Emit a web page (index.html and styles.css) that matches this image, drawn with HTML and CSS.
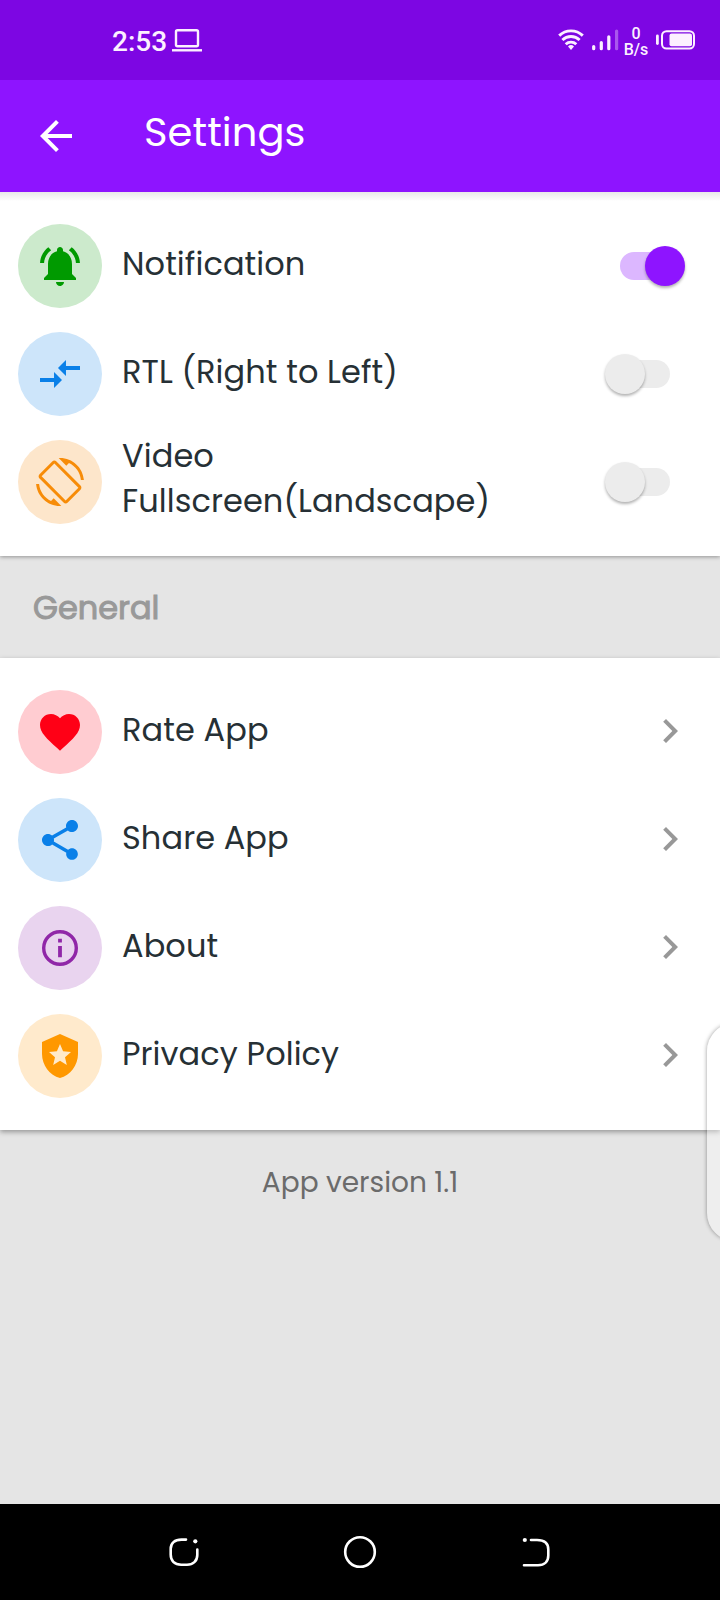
FILE: index.html
```html
<!DOCTYPE html>
<html lang="en">
<head>
<meta charset="utf-8">
<title>Settings</title>
<link rel="stylesheet" href="styles.css">
</head>
<body>
<div class="screen">
  <div class="statusbar">
    <span class="clock">2:53</span>
    <svg class="laptop" width="30" height="24" viewBox="0 0 30 24" fill="none" stroke="currentColor"><rect x="4" y="2.200" width="22" height="16" rx="1.500" stroke-width="2.400"/><path d="M0 22.300h30" stroke-width="2.400"/></svg>
    <div class="status-icons">
      <svg class="wifi" width="26" height="22" viewBox="0 0 26 22" fill="none" stroke="currentColor" stroke-width="2.900"><path d="M1.200 6.600a17 17 0 0 1 23.600 0M4.400 11a12.400 12.400 0 0 1 17.200 0M7.700 15.200a7.800 7.800 0 0 1 10.600 0"/><path d="M10 17.500a4.400 4.400 0 0 1 6 0L13 21z" fill="currentColor" stroke="none"/></svg>
      <svg class="signal" width="27" height="22" viewBox="0 0 27 22" fill="none" stroke="currentColor" stroke-width="3.200" stroke-linecap="round"><path d="M1.700 17.500v2.200M9.300 13.500v6.200M16.800 7.800v11.900"/><path class="weak" d="M24.600 2v17.700"/></svg>
      <div class="speed"><span>0</span><span>B/s</span></div>
      <svg class="battery" width="39" height="20" viewBox="0 0 39 20"><path d="M1.400 6v7.500" stroke="currentColor" stroke-width="2.800" stroke-linecap="round"/><rect x="6" y="1.200" width="32" height="17.400" rx="4.500" fill="none" stroke="currentColor" stroke-width="2"/><rect x="13.500" y="3.500" width="22.500" height="12.800" rx="2" fill="currentColor"/></svg>
    </div>
  </div>
  <header class="appbar">
    <svg class="icon" viewBox="0 0 24 24"><path d="M20 11H7.830l5.590-5.590L12 4l-8 8 8 8 1.410-1.410L7.830 13H20v-2z"/></svg>
    <h1 class="title">Settings</h1>
  </header>
  <section class="card first">
    <div class="row">
      <span class="badge green"><svg class="icon" viewBox="0 0 24 24"><path d="M7.580 4.080L6.150 2.650C3.750 4.480 2.170 7.300 2.030 10.500h2c.15-2.650 1.510-4.970 3.550-6.420zm12.390 6.420h2c-.15-3.200-1.730-6.020-4.120-7.850l-1.420 1.430c2.020 1.450 3.390 3.770 3.540 6.420zM18 11c0-3.070-1.640-5.640-4.500-6.320V4c0-.83-.67-1.500-1.500-1.500s-1.500.67-1.500 1.500v.68C7.630 5.360 6 7.920 6 11v5l-2 2v1h16v-1l-2-2v-5zm-6 11c.14 0 .27-.01.4-.04.65-.14 1.180-.58 1.440-1.180.1-.24.15-.5.15-.78h-4c.01 1.100.9 2 2.010 2z"/></svg></span>
      <span class="label">Notification</span>
      <span class="switch on"><i class="track"></i><i class="thumb"></i></span>
    </div>
    <div class="row">
      <span class="badge blue"><svg class="icon" viewBox="0 0 24 24"><path d="M9.010 14H2v2h7.010v3L13 15l-3.990-4v3zm5.980-1v-3H22V8h-7.010V5L11 9l3.990 4z"/></svg></span>
      <span class="label">RTL (Right to Left)</span>
      <span class="switch"><i class="track"></i><i class="thumb"></i></span>
    </div>
    <div class="row">
      <span class="badge orange"><svg class="icon" viewBox="0 0 24 24"><path d="M16.480 2.520c3.270 1.550 5.610 4.720 5.970 8.480h1.500C23.440 4.840 18.290 0 12 0l-.66.03 3.810 3.810 1.330-1.320zm-6.250-.77c-.59-.59-1.540-.59-2.120 0L1.750 8.110c-.59.59-.59 1.540 0 2.120l12.020 12.020c.59.59 1.540.59 2.120 0l6.360-6.360c.59-.59.59-1.540 0-2.120L10.230 1.750zm4.600 19.440L2.810 9.170l6.360-6.360 12.020 12.020-6.360 6.360zm-7.310.29C4.250 19.940 1.910 16.760 1.550 13H.05C.56 19.160 5.710 24 12 24l.66-.03-3.810-3.810-1.330 1.320z"/></svg></span>
      <span class="label two-line">Video<br>Fullscreen(Landscape)</span>
      <span class="switch"><i class="track"></i><i class="thumb"></i></span>
    </div>
  </section>
  <h2 class="heading">General</h2>
  <section class="card second">
    <div class="row">
      <span class="badge red"><svg class="icon" viewBox="0 0 24 24"><path d="M12 21.350l-1.450-1.320C5.400 15.360 2 12.280 2 8.500 2 5.420 4.420 3 7.500 3c1.740 0 3.410.81 4.500 2.090C13.090 3.810 14.760 3 16.500 3 19.580 3 22 5.420 22 8.500c0 3.780-3.400 6.860-8.550 11.540L12 21.350z"/></svg></span>
      <span class="label">Rate App</span>
      <svg class="icon chevron" viewBox="0 0 24 24"><path d="M10 6L8.590 7.410 13.170 12l-4.580 4.590L10 18l6-6z"/></svg>
    </div>
    <div class="row">
      <span class="badge blue"><svg class="icon" viewBox="0 0 24 24"><path d="M18 16.080c-.76 0-1.440.3-1.960.77L8.910 12.700c.05-.23.09-.46.09-.7s-.04-.47-.09-.7l7.050-4.110c.54.5 1.250.81 2.040.81 1.660 0 3-1.340 3-3s-1.340-3-3-3-3 1.340-3 3c0 .24.04.47.09.7L8.040 9.810C7.500 9.310 6.790 9 6 9c-1.660 0-3 1.340-3 3s1.340 3 3 3c.79 0 1.500-.31 2.040-.81l7.120 4.160c-.05.21-.08.43-.08.65 0 1.610 1.310 2.920 2.920 2.920s2.920-1.310 2.920-2.920-1.310-2.920-2.920-2.920z"/></svg></span>
      <span class="label">Share App</span>
      <svg class="icon chevron" viewBox="0 0 24 24"><path d="M10 6L8.590 7.410 13.170 12l-4.580 4.590L10 18l6-6z"/></svg>
    </div>
    <div class="row">
      <span class="badge purple"><svg class="icon" viewBox="0 0 24 24"><circle cx="12" cy="12" r="8.150" fill="none" stroke="currentColor" stroke-width="1.700"/><path d="M11.050 11h1.900v5.600h-1.900zM11.050 7.400h1.900v1.900h-1.900z"/></svg></span>
      <span class="label">About</span>
      <svg class="icon chevron" viewBox="0 0 24 24"><path d="M10 6L8.590 7.410 13.170 12l-4.580 4.590L10 18l6-6z"/></svg>
    </div>
    <div class="row">
      <span class="badge amber"><svg class="icon" viewBox="0 0 24 24"><path d="M12 1L3 5v6c0 5.550 3.840 10.740 9 12 5.160-1.260 9-6.450 9-12V5L12 1zm2.500 11.590l.9 3.880-3.400-2.050-3.400 2.050.9-3.870-3-2.590 3.960-.34L12 6.020l1.540 3.640 3.960.34-3 2.590z"/></svg></span>
      <span class="label">Privacy Policy</span>
      <svg class="icon chevron" viewBox="0 0 24 24"><path d="M10 6L8.590 7.410 13.170 12l-4.580 4.590L10 18l6-6z"/></svg>
    </div>
  </section>
  <footer class="version">App version 1.1</footer>
  <nav class="navbar">
    <svg width="32" height="32" viewBox="0 0 32 32"><path d="M18 3.600H13.500C6.500 3.600 2.700 7.300 2.700 12.800v5.700c0 6.500 4 10.200 10.500 10.200h5.800c6 0 10.300-3.700 10.300-9.700V13.500"/><circle class="dot" cx="27.300" cy="5.300" r="2.100"/></svg>
    <svg width="34" height="34" viewBox="0 0 34 34"><circle cx="17" cy="17" r="14.800"/></svg>
    <svg width="32" height="32" viewBox="0 0 32 32"><path d="M11 4H17c7.500 0 11.300 3.500 11.300 9.500v6c0 6-3.800 9.800-10.300 9.800H4"/><circle class="dot" cx="4.800" cy="4" r="2.100"/></svg>
  </nav>
  <div class="edge-panel"></div>
</div>
</body>
</html>
```
FILE: styles.css
```css
* { box-sizing: border-box; }
body { margin: 0; font-family: Poppins, Inter, sans-serif; }
svg { display: block; flex: none; }

.screen {
  position: relative;
  width: 720px;
  height: 1600px;
  display: flex;
  flex-direction: column;
  overflow: hidden;
  background: #e5e5e5;
}

.statusbar {
  height: 80px;
  display: flex;
  align-items: center;
  padding: 0 25px 0 112px;
  background: #7d06e3;
  color: #fcf0ff;
  font-family: Roboto, sans-serif;
  font-weight: 500;
}
.clock { font-size: 28px; line-height: 32px; padding-top: 4px; }
.laptop { margin-left: 5px; }
.status-icons { display: flex; align-items: center; margin-left: auto; }
.signal { margin-left: 8px; }
.weak { opacity: .35; }
.speed {
  display: flex;
  flex-direction: column;
  align-items: center;
  width: 24px;
  margin: 3px 8px 0 5px;
  font-size: 16px;
  line-height: 16px;
}

.appbar {
  position: relative;
  z-index: 1;
  height: 112px;
  display: flex;
  align-items: center;
  gap: 64px;
  padding-left: 32px;
  background: #8e14ff;
  color: #fff;
}
.icon { width: 48px; height: 48px; fill: currentColor; }
.title {
  margin: 0;
  padding-bottom: 9px;
  font-size: 40px;
  line-height: 56px;
  font-weight: 400;
  letter-spacing: .1px;
}

.card {
  position: relative;
  display: flex;
  flex-direction: column;
  gap: 24px;
  padding: 32px 26px 32px 18px;
  background: #fff;
}
.first {
  background: linear-gradient(#e9e9e9, #fff 9px);
  box-shadow: 0 1px 4px rgba(0, 0, 0, .36);
}
.second { box-shadow: 0 2px 5px rgba(0, 0, 0, .35); }
.row { display: flex; align-items: center; height: 84px; }
.badge {
  display: grid;
  place-items: center;
  flex: none;
  width: 84px;
  height: 84px;
  border-radius: 50%;
}
.green { background: #cceacc; color: #009a00; }
.blue { background: #cde5fa; color: #0a80e8; }
.orange { background: #fde6cb; color: #f78c08; }
.red { background: #ffccd1; color: #ff0016; }
.purple { background: #e9d4ef; color: #9027a8; }
.amber { background: #ffeacc; color: #ff9800; }

.label {
  flex: 1;
  margin-left: 20px;
  padding-bottom: 6px;
  font-size: 32px;
  line-height: 45px;
  letter-spacing: .08px;
  color: #263035;
  white-space: nowrap;
}
.two-line { padding-bottom: 9px; margin-top: 1px; }
.chevron { color: #989898; margin-bottom: 2px; }

.switch { position: relative; width: 80px; height: 40px; margin-right: 9px; flex: none; }
.track { position: absolute; left: 15px; top: 6px; width: 50px; height: 28px; border-radius: 14px; background: #ececec; }
.thumb { position: absolute; left: 0; top: 0; width: 40px; height: 40px; border-radius: 50%; background: #ececec; box-shadow: 0 2px 3px rgba(0, 0, 0, .3); }
.on .track { background: #dcb7ff; }
.on .thumb { left: 40px; background: #8e14ff; }

.heading {
  height: 102px;
  margin: 0;
  padding: 29px 0 0 33px;
  font-size: 32px;
  line-height: 45px;
  font-weight: 400;
  -webkit-text-stroke: 1px #999;
  color: #999;
}
.version {
  flex: 1;
  padding-top: 33px;
  text-align: center;
  font-size: 28px;
  line-height: 40px;
  color: #6b6b6b;
}
.navbar {
  height: 96px;
  display: flex;
  justify-content: space-between;
  align-items: center;
  padding: 0 168px;
  background: #000;
}
.navbar svg { fill: none; stroke: #fff; stroke-width: 2.6; stroke-linecap: round; }
.navbar .dot { fill: #fff; stroke: none; }

.edge-panel {
  position: absolute;
  left: 707px;
  top: 1023px;
  width: 60px;
  height: 218px;
  border-radius: 28px;
  background: rgba(255, 255, 255, .35);
  box-shadow: 0 0 4px rgba(0, 0, 0, .4);
}
```
